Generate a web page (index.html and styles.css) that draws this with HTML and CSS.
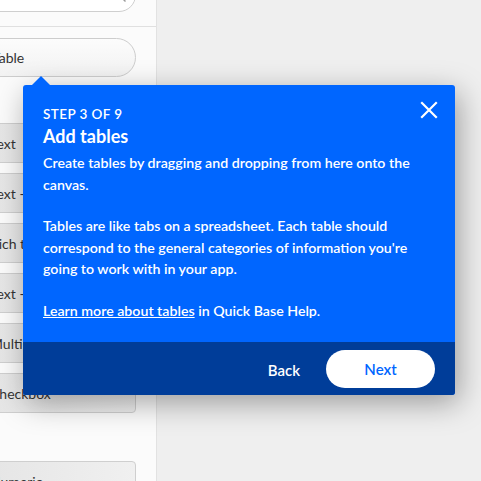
FILE: index.html
```html
<!DOCTYPE html>
<html lang="en">
<head>
<meta charset="utf-8">
<title>Add tables</title>
<link rel="stylesheet" href="styles.css">
</head>
<body>
<div class="app">
  <aside class="sidebar">
    <div class="sidebar-inner">
      <div class="search">
        <span class="search-text">Search</span>
        <svg class="search-icon" width="16" height="16" viewBox="0 0 16 16" fill="none" stroke="#9a9a9a" stroke-width="1.4"><circle cx="6.5" cy="6.5" r="5"/><path d="M10.2 10.2 L14.5 14.5"/></svg>
      </div>
    </div>
    <div class="divider"></div>
    <div class="sidebar-inner">
      <div class="pill">Table</div>
      <div class="section-gap"></div>
      <ul class="fields">
        <li class="field">Text</li>
        <li class="field">Text - Multi-line</li>
        <li class="field">Rich text</li>
        <li class="field">Text - Multiple choice</li>
        <li class="field">Multi-select text</li>
        <li class="field">Checkbox</li>
      </ul>
      <div class="group-gap"></div>
      <ul class="fields">
        <li class="field">Numeric</li>
      </ul>
    </div>
  </aside>
  <main class="canvas"></main>
</div>

<div class="tour" role="dialog" aria-labelledby="tour-title">
  <div class="tour-body">
    <button class="tour-close" aria-label="Close">
      <svg width="18" height="18" viewBox="0 0 18 18" fill="none" stroke="#fff" stroke-width="2.2" stroke-linecap="square"><path d="M2 2 L16 16 M16 2 L2 16"/></svg>
    </button>
    <div class="tour-step">STEP 3 OF 9</div>
    <h2 class="tour-title" id="tour-title">Add tables</h2>
    <p>Create tables by dragging and dropping from here onto the canvas.</p>
    <p>Tables are like tabs on a spreadsheet. Each table should correspond to the general categories of information you're going to work with in your app.</p>
    <p><a href="#" class="tour-link">Learn more about tables</a> in Quick Base Help.</p>
  </div>
  <div class="tour-footer">
    <button class="btn-back">Back</button>
    <button class="btn-next">Next</button>
  </div>
</div>
</body>
</html>
```

FILE: styles.css
```css
* { box-sizing: border-box; }
html, body {
  margin: 0;
  padding: 0;
  height: 100%;
  overflow: hidden;
}
body {
  font-family: Lato, "Open Sans", "Liberation Sans", sans-serif;
  background: #efefef;
}
.app {
  display: flex;
  height: 481px;
}
.sidebar {
  width: 157px;
  flex: 0 0 157px;
  background: #fbfbfb;
  border-right: 1px solid #e2e2e2;
  overflow: hidden;
}
.canvas {
  flex: 1;
  background: #efefef;
}
.sidebar-inner {
  margin-left: -60px;
  padding-right: 20px;
}
.search {
  height: 34px;
  margin-top: -22px;
  border: 1px solid #cfcfcf;
  border-radius: 17px;
  background: #fff;
  display: flex;
  align-items: center;
  justify-content: space-between;
  padding: 0 8px 0 14px;
  color: #999;
  font-size: 14px;
}
.search-icon { display: block; }
.divider {
  height: 1px;
  background: #e0e0e0;
  margin-top: 14px;
}
.pill {
  margin-top: 11px;
  height: 39px;
  border: 1px solid #cdcdcd;
  border-radius: 20px;
  background: linear-gradient(#fcfcfc, #f2f2f2);
  display: flex;
  align-items: center;
  padding-left: 51px;
  font-size: 14px;
  color: #333;
}
.section-gap { height: 46px; }
.fields {
  list-style: none;
  margin: 0;
  padding: 0;
  display: flex;
  flex-direction: column;
  gap: 10px;
}
.field {
  height: 40px;
  border: 1px solid #cfcfcf;
  border-radius: 4px;
  background: linear-gradient(90deg, #e2e2e2, #f0f0f0);
  display: flex;
  align-items: center;
  padding-left: 49px;
  font-size: 14px;
  color: #333;
  white-space: nowrap;
  overflow: hidden;
}
.group-gap { height: 48px; }

.tour {
  position: absolute;
  left: 23px;
  top: 85px;
  width: 432px;
  background: #0066ff;
  border-radius: 3px;
  color: #fff;
  box-shadow: 4px 8px 30px rgba(0, 0, 0, 0.35);
}
.tour::before {
  content: "";
  position: absolute;
  left: 9px;
  top: -9px;
  border-left: 9px solid transparent;
  border-right: 9px solid transparent;
  border-bottom: 9px solid #0066ff;
}
.tour-body {
  position: relative;
  padding: 18px 20px 21px 20px;
}
.tour-close {
  position: absolute;
  right: 17px;
  top: 16px;
  background: none;
  border: 0;
  padding: 0;
  width: 18px;
  height: 18px;
  cursor: pointer;
}
.tour-close svg { display: block; }
.tour-step {
  font-size: 13.5px;
  font-weight: 600;
  letter-spacing: 0.4px;
  line-height: 20px;
  margin-top: 1px;
}
.tour-title {
  margin: 0;
  font-size: 18px;
  font-weight: 700;
  line-height: 24px;
}
.tour p {
  margin: 4px 0 20px;
  font-size: 14.2px;
  line-height: 21.5px;
  font-weight: 600;
}
.tour p + p { margin-top: 0; }
.tour p:last-child { margin-bottom: 0; }
.tour-link { color: #fff; text-decoration: underline; }
.tour-footer {
  background: #003d99;
  height: 53px;
  display: flex;
  align-items: center;
  justify-content: flex-end;
  gap: 26px;
  padding-right: 20px;
  border-radius: 0 0 3px 3px;
}
.btn-back {
  background: none;
  border: 0;
  color: #fff;
  font-family: inherit;
  font-size: 15px;
  font-weight: 600;
  padding: 0;
  margin-top: 3px;
}
.btn-next {
  width: 109px;
  height: 38px;
  border-radius: 19px;
  border: 0;
  background: #fff;
  color: #0066ff;
  font-family: inherit;
  font-size: 15px;
  font-weight: 600;
}
```
